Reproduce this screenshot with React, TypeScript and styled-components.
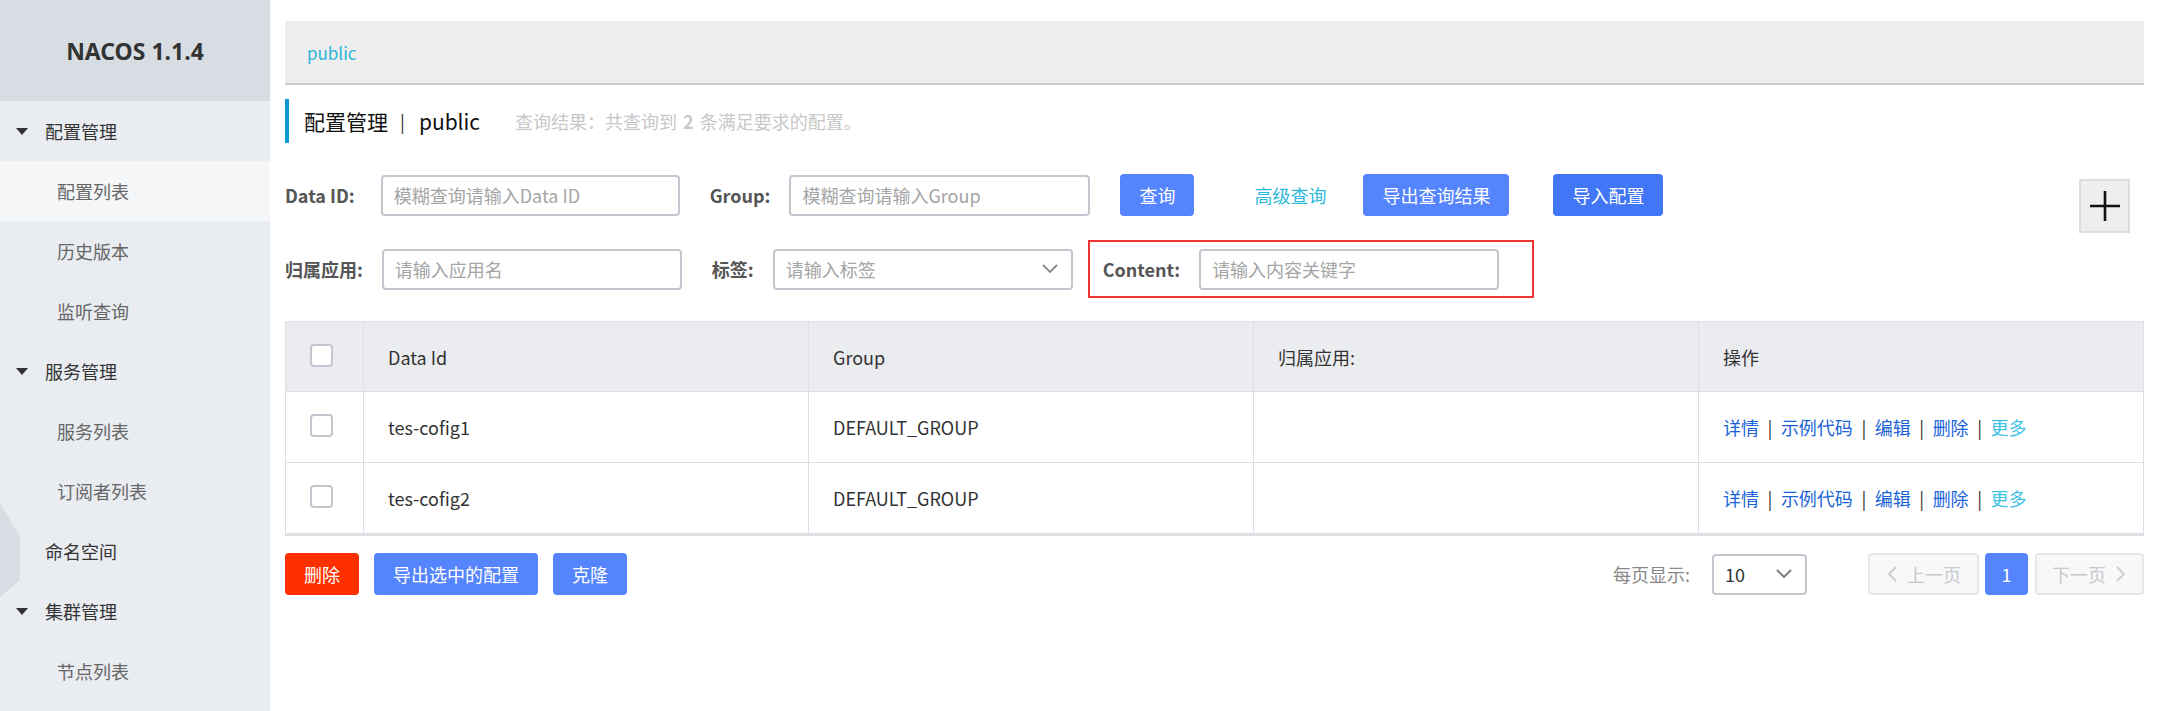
import React from 'react';
import styled, { createGlobalStyle } from 'styled-components';

const GlobalStyle = createGlobalStyle`
    html, body {
        margin: 0;
        padding: 0;
        background: #fff;
    }
    body {
        font-family: "Noto Sans CJK SC", "Noto Sans", sans-serif;
        font-size: 18px;
        color: #333;
    }
    * {
        box-sizing: border-box;
    }
`;

const Layout = styled.div`
    display: flex;
    min-height: 711px;
`;

const Sidebar = styled.aside`
    position: relative;
    width: 270px;
    flex-shrink: 0;
    background: #e9ecf1;
`;

const Logo = styled.div`
    height: 101px;
    display: flex;
    align-items: center;
    justify-content: center;
    background: #d8dde4;
    font-family: "Noto Sans", sans-serif;
    font-weight: 700;
    font-size: 23px;
    color: #333;
`;

const MenuGroup = styled.div<{ $indent?: number }>`
    height: 60px;
    display: flex;
    align-items: center;
    padding-left: ${(p) => p.$indent ?? 16}px;
    font-size: 18px;
    color: #333;
`;

const Caret = styled.span`
    width: 0;
    height: 0;
    border-left: 6px solid transparent;
    border-right: 6px solid transparent;
    border-top: 7px solid #333;
    margin-right: 17px;
`;

const MenuItem = styled.div<{ $active?: boolean }>`
    height: 60px;
    display: flex;
    align-items: center;
    padding-left: 57px;
    font-size: 18px;
    color: #666;
    background: ${(p) => (p.$active ? '#f4f6f8' : 'transparent')};
`;

const CollapseHandle = styled.div`
    position: absolute;
    left: 0;
    top: 503px;
    width: 20px;
    height: 94px;
    background: #d8dce3;
    clip-path: polygon(0 0, 100% 36%, 100% 82%, 0 100%);
`;

const Main = styled.main`
    flex: 1;
    min-width: 0;
    padding: 21px 16px 0 15px;
`;

const Breadcrumb = styled.div`
    height: 64px;
    display: flex;
    align-items: center;
    padding-left: 22px;
    background: #eeeeee;
    border-bottom: 2px solid #cccccc;
    color: #2ab5d8;
    font-size: 17px;
`;

const TitleBar = styled.div`
    margin-top: 14px;
    height: 44px;
    display: flex;
    align-items: center;
    border-left: 4px solid #0a99d2;
    padding-left: 15px;
`;

const Title = styled.span`
    font-size: 21px;
    color: #111;
`;

const TitleSep = styled.span`
    margin: 0 14px 0 12px;
`;

const ResultText = styled.span`
    margin-left: 35px;
    font-size: 18px;
    color: #c8c8c8;
    b {
        font-weight: 700;
        margin: 0 6px;
    }
`;

const FormRow = styled.div<{ $top: number }>`
    display: flex;
    align-items: center;
    margin-top: ${(p) => p.$top}px;
    min-height: 41px;
`;

const Label = styled.label<{ $gap?: number }>`
    font-weight: 700;
    font-size: 18px;
    color: #555;
    margin-right: ${(p) => p.$gap ?? 19}px;
    white-space: nowrap;
`;

const Field = styled.div<{ $gap?: number }>`
    display: flex;
    align-items: center;
    margin-right: ${(p) => p.$gap ?? 30}px;
`;

const Input = styled.input<{ $width?: number }>`
    width: ${(p) => p.$width ?? 300}px;
    height: 41px;
    border: 2px solid #c4c6cf;
    border-radius: 4px;
    padding: 0 11px;
    font-family: inherit;
    font-size: 18px;
    color: #333;
    outline: none;
    &::placeholder {
        color: #a5a5a5;
    }
`;

const SelectBox = styled.div<{ $width: number; $placeholder?: boolean }>`
    width: ${(p) => p.$width}px;
    height: 41px;
    border: 2px solid #c4c6cf;
    border-radius: 4px;
    padding: 0 12px 0 11px;
    display: flex;
    align-items: center;
    justify-content: space-between;
    font-size: 18px;
    color: ${(p) => (p.$placeholder ? '#a5a5a5' : '#333')};
`;

const Button = styled.button<{ $kind?: 'primary' | 'dark' | 'danger'; $gap?: number }>`
    height: 42px;
    padding: 0 19px;
    border: none;
    border-radius: 4px;
    font-family: inherit;
    font-size: 18px;
    color: #fff;
    white-space: nowrap;
    background: ${(p) =>
        p.$kind === 'danger' ? '#ff3000' : p.$kind === 'dark' ? '#4176f6' : '#5584ff'};
    margin-right: ${(p) => p.$gap ?? 0}px;
`;

const TextLink = styled.a`
    color: #2bb8d9;
    font-size: 18px;
    margin: 0 37px 0 60px;
    cursor: pointer;
`;

const AddButton = styled.button`
    align-self: flex-start;
    margin: 5px 14px -18px auto;
    width: 51px;
    height: 54px;
    background: #eeeeee;
    border: 2px solid #dddddd;
    display: flex;
    align-items: center;
    justify-content: center;
    padding: 0;
`;

const Highlight = styled.div`
    display: flex;
    align-items: center;
    height: 58px;
    border: 2px solid #f03434;
    padding: 0 33px 0 13px;
`;

const Table = styled.div`
    margin-top: 23px;
    border: 1px solid #dcdee3;
    border-bottom: 3px solid #dcdee3;
`;

const TableRow = styled.div<{ $head?: boolean }>`
    display: grid;
    grid-template-columns: 77px 1fr 1fr 1fr 1fr;
    height: ${(p) => (p.$head ? 69 : 71)}px;
    background: ${(p) => (p.$head ? '#ebecf0' : '#fff')};
    & + & {
        border-top: 1px solid #dcdee3;
    }
`;

const Cell = styled.div`
    display: flex;
    align-items: center;
    padding-left: 24px;
    font-size: 18px;
    color: #333;
    & + & {
        border-left: 1px solid #dcdee3;
    }
`;

const Checkbox = styled.span`
    width: 23px;
    height: 23px;
    margin-top: -3px;
    border: 2px solid #c4c6cf;
    border-radius: 4px;
    background: #fff;
`;

const ActionLink = styled.a<{ $light?: boolean }>`
    color: ${(p) => (p.$light ? '#3fc3e4' : '#1a64d8')};
    cursor: pointer;
`;

const ActionSep = styled.span`
    color: #333;
    margin: 0 8.5px;
`;

const Footer = styled.div`
    margin-top: 17px;
    display: flex;
    align-items: center;
`;

const Pager = styled.div`
    margin-left: auto;
    display: flex;
    align-items: center;
`;

const PagerLabel = styled.span`
    color: #888;
    font-size: 18px;
    margin-right: 22px;
`;

const PageButton = styled.button<{ $current?: boolean; $width: number; $gap?: number }>`
    width: ${(p) => p.$width}px;
    height: 42px;
    border-radius: 4px;
    font-family: inherit;
    font-size: 18px;
    display: flex;
    align-items: center;
    justify-content: center;
    gap: 8px;
    padding: 0;
    border: ${(p) => (p.$current ? 'none' : '2px solid #e6e7eb')};
    background: ${(p) => (p.$current ? '#5584ff' : '#f7f8fa')};
    color: ${(p) => (p.$current ? '#fff' : '#c8c8c8')};
    margin-left: ${(p) => p.$gap ?? 0}px;
`;

const Chevron = ({ dir = 'down', color = '#777' }: { dir?: 'down' | 'left' | 'right'; color?: string }) => {
    const d = dir === 'down' ? 'M2 5 L9 12 L16 5' : dir === 'left' ? 'M10 2 L3 9 L10 16' : 'M3 2 L10 9 L3 16';
    const w = dir === 'down' ? 18 : 13;
    return (
        <svg width={w} height="18" viewBox={`0 0 ${w} 18`} fill="none">
            <path d={d} stroke={color} strokeWidth="1.8" />
        </svg>
    );
};

const Plus = () => (
    <svg width="30" height="30" viewBox="0 0 30 30">
        <path d="M15 0 V30 M0 15 H30" stroke="#111" strokeWidth="2.6" />
    </svg>
);

const rows = [
    { id: 'tes-cofig1', group: 'DEFAULT_GROUP', app: '' },
    { id: 'tes-cofig2', group: 'DEFAULT_GROUP', app: '' },
];

const Actions = () => (
    <>
        <ActionLink>详情</ActionLink>
        <ActionSep>|</ActionSep>
        <ActionLink>示例代码</ActionLink>
        <ActionSep>|</ActionSep>
        <ActionLink>编辑</ActionLink>
        <ActionSep>|</ActionSep>
        <ActionLink>删除</ActionLink>
        <ActionSep>|</ActionSep>
        <ActionLink $light>更多</ActionLink>
    </>
);

export default function App() {
    return (
        <>
            <GlobalStyle />
            <Layout>
                <Sidebar>
                    <Logo>NACOS 1.1.4</Logo>
                    <MenuGroup $indent={16}><Caret />配置管理</MenuGroup>
                    <MenuItem $active>配置列表</MenuItem>
                    <MenuItem>历史版本</MenuItem>
                    <MenuItem>监听查询</MenuItem>
                    <MenuGroup $indent={16}><Caret />服务管理</MenuGroup>
                    <MenuItem>服务列表</MenuItem>
                    <MenuItem>订阅者列表</MenuItem>
                    <MenuGroup $indent={45}>命名空间</MenuGroup>
                    <MenuGroup $indent={16}><Caret />集群管理</MenuGroup>
                    <MenuItem>节点列表</MenuItem>
                    <CollapseHandle />
                </Sidebar>

                <Main>
                    <Breadcrumb>public</Breadcrumb>

                    <TitleBar>
                        <Title>配置管理</Title>
                        <TitleSep>|</TitleSep>
                        <Title>public</Title>
                        <ResultText>查询结果：共查询到<b>2</b>条满足要求的配置。</ResultText>
                    </TitleBar>

                    <FormRow $top={31}>
                        <Field>
                            <Label $gap={26}>Data ID:</Label>
                            <Input $width={299} placeholder="模糊查询请输入Data ID" />
                        </Field>
                        <Field>
                            <Label $gap={19}>Group:</Label>
                            <Input $width={301} placeholder="模糊查询请输入Group" />
                        </Field>
                        <Button>查询</Button>
                        <TextLink>高级查询</TextLink>
                        <Button $gap={44}>导出查询结果</Button>
                        <Button $kind="dark">导入配置</Button>
                        <AddButton><Plus /></AddButton>
                    </FormRow>

                    <FormRow $top={24}>
                        <Field>
                            <Label>归属应用:</Label>
                            <Input placeholder="请输入应用名" />
                        </Field>
                        <Field $gap={15}>
                            <Label>标签:</Label>
                            <SelectBox $width={300} $placeholder>
                                请输入标签
                                <Chevron color="#888" />
                            </SelectBox>
                        </Field>
                        <Highlight>
                            <Label>Content:</Label>
                            <Input placeholder="请输入内容关键字" />
                        </Highlight>
                    </FormRow>

                    <Table>
                        <TableRow $head>
                            <Cell><Checkbox /></Cell>
                            <Cell>Data Id</Cell>
                            <Cell>Group</Cell>
                            <Cell>归属应用:</Cell>
                            <Cell>操作</Cell>
                        </TableRow>
                        {rows.map((r) => (
                            <TableRow key={r.id}>
                                <Cell><Checkbox /></Cell>
                                <Cell>{r.id}</Cell>
                                <Cell>{r.group}</Cell>
                                <Cell>{r.app}</Cell>
                                <Cell><Actions /></Cell>
                            </TableRow>
                        ))}
                    </Table>

                    <Footer>
                        <Button $kind="danger" $gap={15}>删除</Button>
                        <Button $gap={15}>导出选中的配置</Button>
                        <Button>克隆</Button>
                        <Pager>
                            <PagerLabel>每页显示:</PagerLabel>
                            <SelectBox $width={95}>
                                10
                                <Chevron color="#777" />
                            </SelectBox>
                            <PageButton $width={111} $gap={61}>
                                <Chevron dir="left" color="#ccc" />上一页
                            </PageButton>
                            <PageButton $width={43} $gap={6} $current>1</PageButton>
                            <PageButton $width={109} $gap={7}>
                                下一页<Chevron dir="right" color="#ccc" />
                            </PageButton>
                        </Pager>
                    </Footer>
                </Main>
            </Layout>
        </>
    );
}
